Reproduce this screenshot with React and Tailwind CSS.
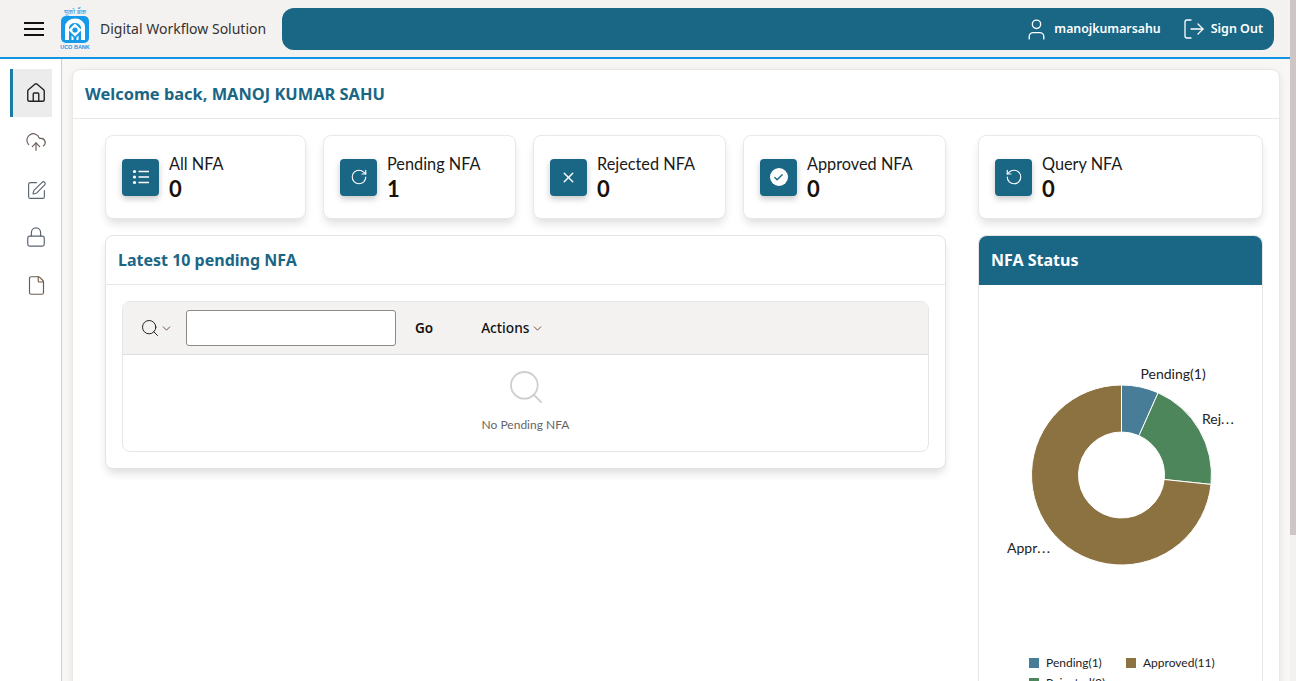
import React from "react";
import { House, CloudUpload, SquarePen, Lock, File, User, LogOut, Search, ChevronDown, RotateCw, RotateCcw, X, Check } from "lucide-react";

const lato = "[font-family:Lato,'Noto_Sans',sans-serif]";

function ListIcon() {
  return (
    <svg width="18" height="18" viewBox="0 0 18 18" fill="none" stroke="white">
      <circle cx="2.5" cy="3.5" r="1.6" fill="white" stroke="none" />
      <circle cx="2.5" cy="9" r="1.6" fill="white" stroke="none" />
      <circle cx="2.5" cy="14.5" r="1.6" fill="white" stroke="none" />
      <path d="M6.5 3.5H17M6.5 9H17M6.5 14.5H17" strokeWidth="1.3" />
    </svg>
  );
}

function CheckCircle() {
  return (
    <span className="flex h-[18px] w-[18px] items-center justify-center rounded-full bg-white">
      <Check size={11} strokeWidth={3} color="#1a6685" />
    </span>
  );
}

function Stat({ w, label, value, icon }) {
  return (
    <div className={`${w} flex h-[84px] shrink-0 items-center gap-[10px] rounded-lg border border-[#e8e8e8] bg-white pl-4 shadow-[0_6px_10px_-2px_rgba(0,0,0,0.14)]`}>
      <div className="flex h-[37px] w-[37px] items-center justify-center rounded-[4px] bg-[#1a6685] shadow-[0_3px_6px_rgba(0,0,0,0.22)]">
        {icon}
      </div>
      <div className={`${lato} -mt-[1px] flex flex-col`}>
        <span className="text-[16.3px] leading-[24px] text-[#1a1a1a]">{label}</span>
        <span className="text-[22px] leading-[26px] font-bold text-[#1a1208]">{value}</span>
      </div>
    </div>
  );
}

function Logo() {
  return (
    <div className="flex w-[32px] flex-col items-center">
      <span className="h-[8px] text-[7px] leading-[8px] whitespace-nowrap text-[#1c9be6] [font-family:'Noto_Sans','DejaVu_Sans',sans-serif]">यूको बैंक</span>
      <svg width="28" height="27" viewBox="0 0 28 27">
        <rect width="28" height="27" rx="5" fill="#149ae8" />
        <path d="M4 24V11a10 8.5 0 0 1 20 0v13h-4V12a6 5 0 0 0-12 0v12z" fill="white" />
        <path d="M14 7.5l6.5 6.5-6.5 6.5-6.5-6.5z" fill="white" />
        <circle cx="14" cy="14" r="2.6" fill="#149ae8" />
        <path d="M10.5 24v-4.5l2 2V24zM17.5 24v-4.5l-2 2V24z" fill="white" />
      </svg>
      <span className="mt-[1px] text-[5.5px] leading-[6px] font-bold whitespace-nowrap text-[#149ae8] [font-family:'Liberation_Sans',sans-serif]">UCO BANK</span>
    </div>
  );
}

function NavItem({ children, active }) {
  return (
    <div className={`flex h-12 w-[42px] items-center justify-center ${active ? "border-l-[3px] border-[#1a7fa3] bg-[#ececec] pl-[7px]" : "pl-[10px]"}`}>
      {children}
    </div>
  );
}

function Donut() {
  const cx = 142.5;
  const cy = 190;
  const R = 90;
  const r = 43;
  const pt = (rad, deg) => {
    const a = ((deg - 90) * Math.PI) / 180;
    return `${(cx + rad * Math.cos(a)).toFixed(2)} ${(cy + rad * Math.sin(a)).toFixed(2)}`;
  };
  const seg = (a, b) => {
    const large = b - a > 180 ? 1 : 0;
    return `M${pt(R, a)}A${R} ${R} 0 ${large} 1 ${pt(R, b)}L${pt(r, b)}A${r} ${r} 0 ${large} 0 ${pt(r, a)}Z`;
  };
  return (
    <svg width="283" height="368" viewBox="0 0 283 368" className="block">
      <path d={seg(0, 24)} fill="#487d98" stroke="white" strokeWidth="1" />
      <path d={seg(24, 96)} fill="#4e865b" stroke="white" strokeWidth="1" />
      <path d={seg(96, 360)} fill="#8b7240" stroke="white" strokeWidth="1" />
      <g fontFamily="Lato, sans-serif" fontSize="14" fill="#222">
        <text x="161.5" y="94">Pending(1)</text>
        <text x="223" y="139">Rej<tspan letterSpacing="1.4">...</tspan></text>
        <text x="28" y="268">Appr<tspan letterSpacing="1.4">...</tspan></text>
      </g>
    </svg>
  );
}

function Legend({ color, label, w }) {
  return (
    <div className={`flex items-center gap-[7px] ${w}`}>
      <span className="h-[10px] w-[10px] shrink-0" style={{ background: color }} />
      <span className={`${lato} text-[12px] leading-[20px] whitespace-nowrap text-[#222]`}>{label}</span>
    </div>
  );
}

export default function App() {
  return (
    <div className="flex h-[681px] w-[1296px] overflow-hidden bg-white [font-family:'Noto_Sans',sans-serif]">
      <div className="flex w-[1290px] flex-col">
        <header className="flex h-[59px] shrink-0 items-center border-b-2 border-[#1196e6] bg-[#f4f2f0] pt-[1px]">
          <div className="flex w-[68px] justify-center">
            <div className="flex flex-col gap-[4px]">
              <span className="h-[2px] w-[20px] bg-[#111]" />
              <span className="h-[2px] w-[20px] bg-[#111]" />
              <span className="h-[2px] w-[20px] bg-[#111]" />
            </div>
          </div>
          <div className="-ml-[9px]"><Logo /></div>
          <span className="ml-[9px] -mt-[2px] w-[182px] text-[14px] whitespace-nowrap text-[#333]">Digital Workflow Solution</span>
          <div className="flex h-[42px] w-[992px] items-center justify-end rounded-[12px] bg-[#1a6685] pr-[11px] text-white">
            <User size={25} strokeWidth={1.3} />
            <span className="ml-[5px] text-[12.3px] font-semibold">manojkumarsahu</span>
            <LogOut size={24} strokeWidth={1.3} className="ml-[21px]" />
            <span className="ml-[5px] text-[12.5px] font-semibold">Sign Out</span>
          </div>
        </header>

        <div className="flex min-h-0 flex-1">
          <aside className="flex w-[62px] shrink-0 flex-col border-r border-[#cfcfcf] bg-white pt-[10px] pl-[10px]">
            <NavItem active><House size={22} strokeWidth={1.5} color="#222" /></NavItem>
            <NavItem><CloudUpload size={22} strokeWidth={1.3} color="#6b5a5a" className="mt-[2px]" /></NavItem>
            <NavItem><SquarePen size={21} strokeWidth={1.3} color="#5a6470" className="mt-[2px]" /></NavItem>
            <NavItem><Lock size={22} strokeWidth={1.3} color="#5a6470" /></NavItem>
            <NavItem><File size={21} strokeWidth={1.3} color="#6b5a4a" /></NavItem>
          </aside>

          <main className="min-w-0 flex-1 bg-[#f8f7f6] pt-[10px] pr-[10px] pl-[10px]">
            <div className="h-[700px] rounded-lg border border-[#e8e8e8] bg-white shadow-[0_2px_8px_rgba(0,0,0,0.08)]">
              <div className="flex h-[49px] items-center border-b border-[#e8e8e8] px-3">
                <h1 className="text-[16.4px] font-bold text-[#1a6685]">Welcome back, MANOJ KUMAR SAHU</h1>
              </div>

              <div className="flex gap-[32px] pt-4 pl-[32px]">
                <div className="flex w-[841px] shrink-0 flex-col gap-[16px]">
                  <div className="flex gap-[17px]">
                    <Stat w="w-[201px]" label="All NFA" value="0" icon={<ListIcon />} />
                    <Stat w="w-[193px]" label="Pending NFA" value="1" icon={<RotateCw size={18} strokeWidth={1.5} color="white" />} />
                    <Stat w="w-[193px]" label="Rejected NFA" value="0" icon={<X size={17} strokeWidth={2} color="white" />} />
                    <Stat w="w-[203px]" label="Approved NFA" value="0" icon={<CheckCircle />} />
                  </div>

                  <section className="h-[234px] rounded-lg border border-[#e4e4e4] bg-white shadow-[0_6px_10px_-2px_rgba(0,0,0,0.14)]">
                    <div className="flex h-[49px] items-center border-b border-[#e8e8e8] px-3">
                      <h2 className="text-[16px] font-bold text-[#1a6685]">Latest 10 pending NFA</h2>
                    </div>
                    <div className="mx-4 mt-4 h-[151px] rounded-lg border border-[#e6e6e6]">
                      <div className="flex h-[53px] items-center rounded-t-lg border-b border-[#dedede] bg-[#f4f2f0]">
                        <div className="flex w-[63px] items-center pl-[17px]">
                          <Search size={20} strokeWidth={1.2} color="#222" />
                          <ChevronDown size={13} strokeWidth={1.6} color="#5a3a2a" />
                        </div>
                        <div className="h-[36px] w-[210px] rounded-[3px] border border-[#8a8a8a] bg-white" />
                        <span className="ml-[19px] text-[13.5px] font-semibold text-[#111]">Go</span>
                        <span className="ml-[48px] text-[13.7px] font-medium text-[#111]">Actions</span>
                        <ChevronDown size={13} strokeWidth={1.6} color="#5a3a2a" className="ml-[2px]" />
                      </div>
                      <div className="flex flex-col items-center pt-[12px]">
                        <Search size={40} strokeWidth={1.1} color="#cfcfcf" />
                        <span className={`${lato} mt-[10px] text-[12px] leading-[16px] text-[#666]`}>No Pending NFA</span>
                      </div>
                    </div>
                  </section>
                </div>

                <div className="flex w-[285px] shrink-0 flex-col gap-[16px]">
                  <Stat w="w-full" label="Query NFA" value="0" icon={<RotateCcw size={18} strokeWidth={1.5} color="white" />} />
                  <section className="h-[460px] rounded-lg border border-[#e4e4e4] bg-white">
                    <div className="flex h-[49px] items-center rounded-t-lg bg-[#1a6685] px-3 pb-[2px]">
                      <h2 className="text-[16px] font-bold text-white">NFA Status</h2>
                    </div>
                    <Donut />
                    <div className="flex flex-col pl-[50px]">
                      <div className="flex">
                        <Legend color="#487d98" label="Pending(1)" w="w-[97px]" />
                        <Legend color="#8b7240" label="Approved(11)" w="w-[100px]" />
                      </div>
                      <Legend color="#4e865b" label="Rejected(3)" w="w-[97px]" />
                    </div>
                  </section>
                </div>
              </div>
            </div>
          </main>
        </div>
      </div>
      <div className="w-[6px] bg-[#f4f2f0]">
        <div className="h-[535px] w-[6px] bg-[#cdc6c4]" />
      </div>
    </div>
  );
}
